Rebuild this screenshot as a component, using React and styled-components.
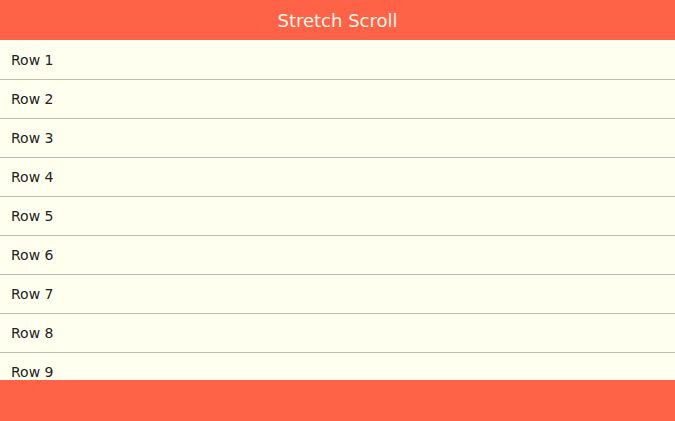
import React from 'react';
import styled, { createGlobalStyle } from 'styled-components';

const GlobalStyle = createGlobalStyle`
    html, body, #root {
        margin: 0;
        height: 100%;
    }
    body {
        font-family: "DejaVu Sans", Verdana, sans-serif;
    }
`;

const Page = styled.div`
    display: flex;
    flex-direction: column;
    height: 100%;
    background: #fffff0;
`;

const Header = styled.header`
    flex: 0 0 40px;
    display: flex;
    align-items: center;
    justify-content: center;
    background: #ff6347;
    color: #fff6e6;
    font-size: 18px;
`;

// scrolling middle area that stretches between header and footer
const Content = styled.div`
    flex: 1;
    padding-top: 1px;
    overflow-y: auto;
    scrollbar-width: none;

    &::-webkit-scrollbar {
        display: none;
    }
`;

const Row = styled.div`
    height: 38px;
    display: flex;
    align-items: center;
    padding-left: 11px;
    border-bottom: 1px solid #c0c0b4;
    color: #222;
    font-size: 14px;
`;

const Footer = styled.footer`
    flex: 0 0 41px;
    background: #ff6347;
`;

const rows = Array.from({ length: 20 }, (_, i) => `Row ${i + 1}`);

export default function App() {
    return (
        <>
            <GlobalStyle />
            <Page>
                <Header>Stretch Scroll</Header>
                <Content>
                    {rows.map((r) => (
                        <Row key={r}>{r}</Row>
                    ))}
                </Content>
                <Footer />
            </Page>
        </>
    );
}
